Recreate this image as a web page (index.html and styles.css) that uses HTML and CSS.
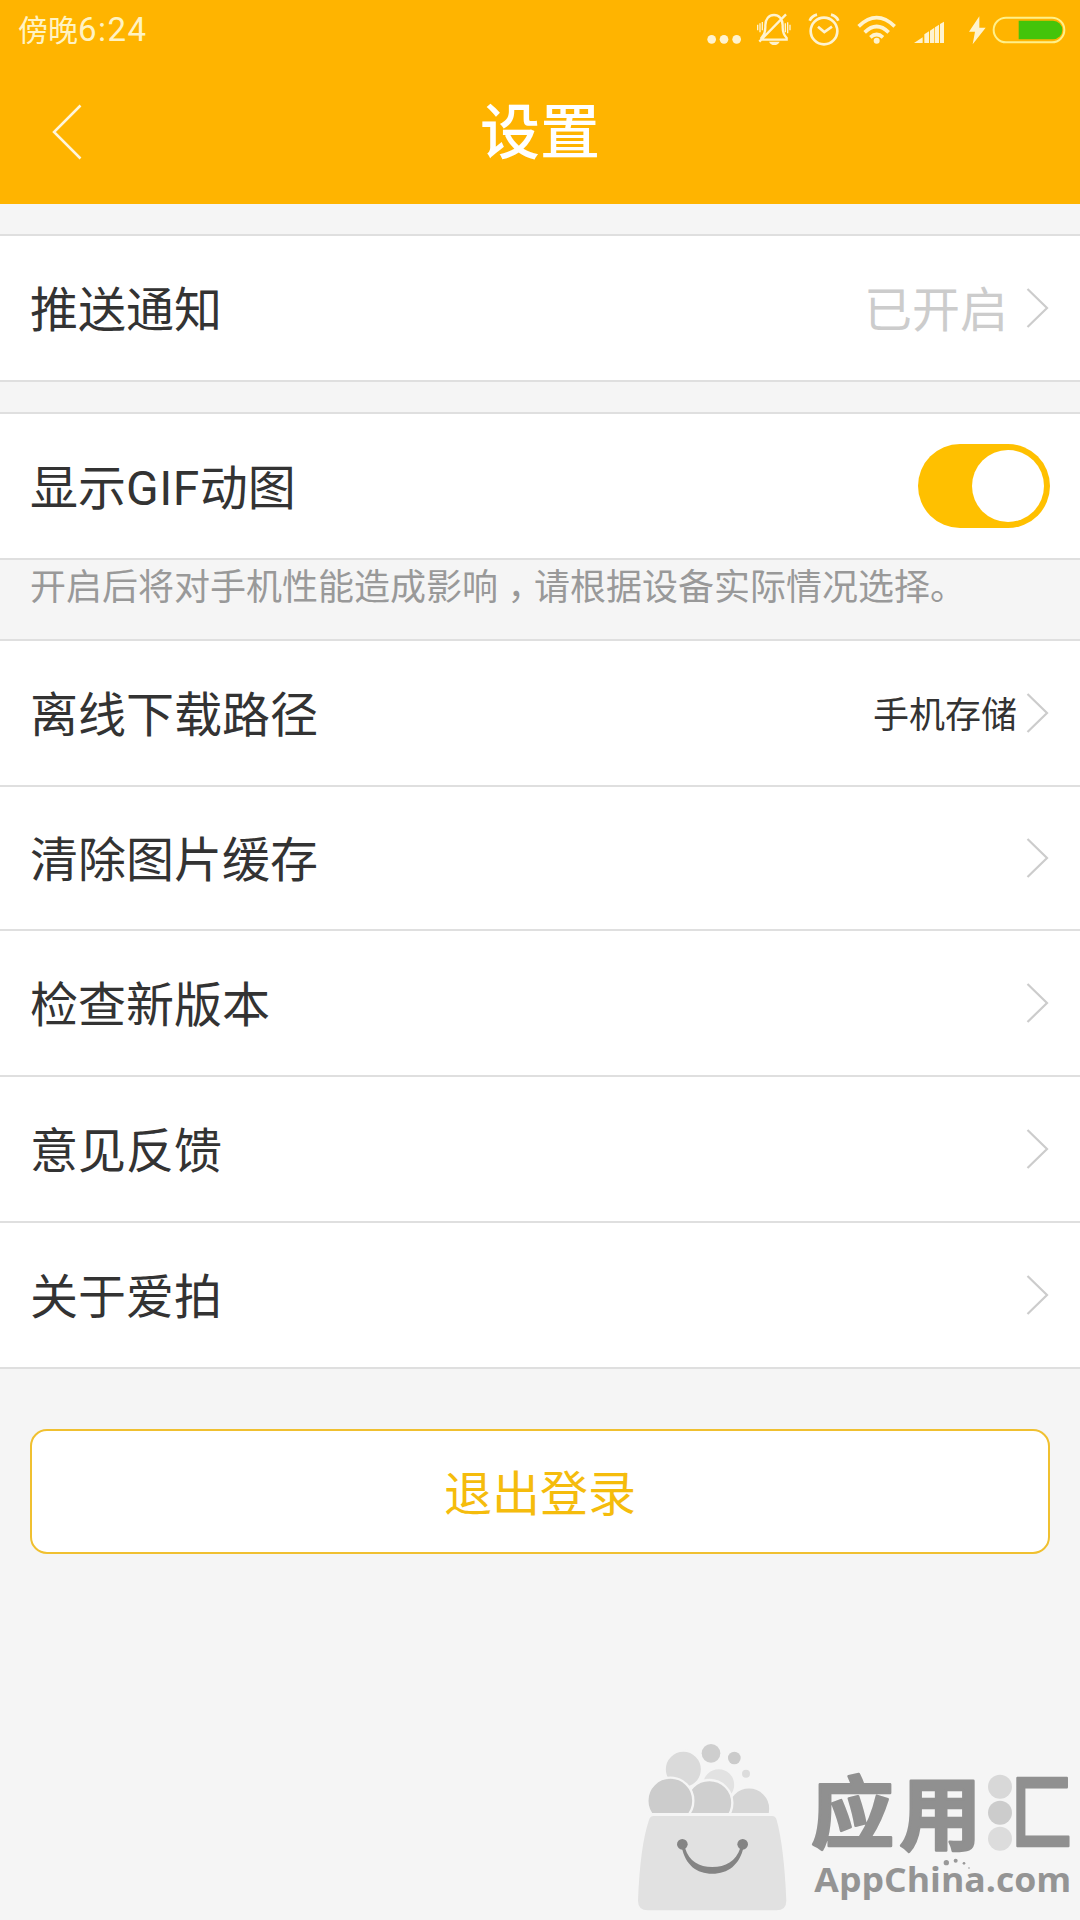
FILE: index.html
```html
<!DOCTYPE html>
<html lang="zh-CN">
<head>
<meta charset="utf-8">
<title>设置</title>
<link rel="stylesheet" href="styles.css">
</head>
<body>
<header class="header">
  <div class="status">
    <div class="time">傍晚<span class="digits">6:24</span></div>
    <svg class="status-icons" viewBox="0 0 1170 180" fill="none" stroke="#fff3cf" stroke-width="8">
      <g fill="#fff3cf" stroke="none"><circle cx="65" cy="118" r="13"/><circle cx="102" cy="118" r="13"/><circle cx="140" cy="118" r="13"/></g>
      <path stroke-width="7" d="M214 119h76v-5c-9-9-12-19-12-32V76c0-19-11-31-26-31s-26 12-26 31v6c0 13-3 23-12 32zM208 125L288 43"/>
      <path stroke-width="4" d="M203 74v17M210 70v27M217 66v25M286 70v27M293 67v33M300 74v17"/>
      <path fill="#fff3cf" stroke="none" d="M237 125h32q-5 10-16 10t-16-10z"/>
      <circle cx="402" cy="93" r="40"/><path d="M384 80l19 16 23-16M359 62q6-14 22-18M445 62q-6-14-22-18"/>
      <path stroke-width="11" d="M506 79q54-52 108 0M524 97q36-35 72 0M541 112q19-17 38 0"/><circle cx="560" cy="122" r="9" fill="#fff3cf" stroke="none"/>
      <path fill="#fff3cf" stroke="none" d="M672 129l26-17v17zM703 103l14-9v35h-14zM720 92l13-9v46h-13zM735 82l12-8v55h-12zM750 72l12-7v64h-12z"/>
      <path fill="#fff3cf" stroke="none" d="M868 49l-31 46h18l-7 38 39-50h-19z"/>
      <rect x="911" y="53" width="212" height="74" rx="37" stroke="#fff08a" stroke-width="6"/>
      <path fill="#44c40a" stroke="none" d="M986 62h103a28 28 0 0 1 0 56H986z"/>
    </svg>
  </div>
  <div class="titlebar">
    <svg class="back" viewBox="0 0 30 56"><path d="M28.500 1.500L2 28l26.500 26.500"/></svg>
    <h1 class="title">设置</h1>
  </div>
</header>
<main class="settings">
  <section class="group">
    <div class="row"><span class="label">推送通知</span><span class="value muted">已开启</span><svg class="chevron" viewBox="0 0 23 40"><path d="M1.500 1L21 20 1.500 39"/></svg></div>
  </section>
  <section class="group gif">
    <div class="row"><span class="label">显示<span class="latin">GIF</span>动图</span><span class="switch"><span class="knob"></span></span></div>
  </section>
  <p class="hint">开启后将对手机性能造成影响<span class="comma" lang="zh-TW">，</span>请根据设备实际情况选择。</p>
  <section class="group list">
    <div class="row"><span class="label">离线下载路径</span><span class="value small">手机存储</span><svg class="chevron" viewBox="0 0 23 40"><path d="M1.500 1L21 20 1.500 39"/></svg></div>
    <div class="row short"><span class="label">清除图片缓存</span><svg class="chevron" viewBox="0 0 23 40"><path d="M1.500 1L21 20 1.500 39"/></svg></div>
    <div class="row"><span class="label">检查新版本</span><svg class="chevron" viewBox="0 0 23 40"><path d="M1.500 1L21 20 1.500 39"/></svg></div>
    <div class="row"><span class="label">意见反馈</span><svg class="chevron" viewBox="0 0 23 40"><path d="M1.500 1L21 20 1.500 39"/></svg></div>
    <div class="row"><span class="label">关于爱拍</span><svg class="chevron" viewBox="0 0 23 40"><path d="M1.500 1L21 20 1.500 39"/></svg></div>
  </section>
  <button class="logout">退出登录</button>
</main>
<footer class="brand">
  <svg class="brand-logo" viewBox="0 0 1380 570">
    <g stroke="#f5f5f5" stroke-width="7">
      <circle cx="190" cy="118" r="56" fill="#dadada"/>
      <circle cx="296" cy="164" r="50" fill="#e2e2e2"/>
      <circle cx="387" cy="236" r="64" fill="#d6d6d6"/>
      <circle cx="268" cy="219" r="69" fill="#cfcfcf"/>
      <circle cx="151" cy="212" r="69" fill="#cccccc"/>
    </g>
    <path fill="#f5f5f5" d="M60 249h430v70H60z"/>
    <circle cx="273" cy="70" r="28" fill="#cecece"/><circle cx="343" cy="84" r="19" fill="#cbcbcb"/><circle cx="378" cy="131" r="12" fill="#dcdcdc"/>
    <path fill="#e1e1e1" d="M101 258H456Q467 258 470 270Q492 350 499 512Q499 541 469 541H84Q54 541 54 512Q60 350 87 270Q90 258 101 258z"/>
    <g fill="#848484"><circle cx="187" cy="343" r="16"/><circle cx="368" cy="343" r="16"/><path d="M185 350C196 405 230 431 277 431S359 405 371 350L361 354C347 395 317 411 277 411S208 395 195 354z"/></g>
    <g class="brand-cn">
      <text transform="translate(573 335) scale(1.020 .96)" x="0" y="0">应</text>
      <text transform="translate(838 338) scale(1.010 .98)" x="0" y="0">用</text>
      <text transform="translate(1173 338) scale(.765 1.010)" x="0" y="0">匚</text>
    </g>
    <circle cx="1140" cy="170" r="36" fill="#d8d8d8"/><circle cx="1140" cy="248" r="36" fill="#cccccc"/><circle cx="1140" cy="326" r="36" fill="#dcdcdc"/>
    <text class="brand-en" x="583" y="485" textLength="771" lengthAdjust="spacingAndGlyphs">AppChina.com</text>
    <g fill="#999"><circle cx="979" cy="398" r="8"/><circle cx="1007" cy="392" r="6"/><circle cx="1032" cy="400" r="4"/><circle cx="1047" cy="414" r="2.500"/></g>
  </svg>
</footer>
</body>
</html>
```
FILE: styles.css
```css
* { box-sizing: border-box; }
body {
  margin: 0;
  width: 1080px;
  height: 1920px;
  overflow: hidden;
  display: flex;
  flex-direction: column;
  background: #f5f5f5;
  color: #333;
  font-family: Roboto, "Noto Sans CJK SC", sans-serif;
}
.header { height: 204px; background: #ffb400; }
.status { height: 60px; display: flex; justify-content: space-between; }
.time {
  padding: 1px 0 0 18px;
  font-size: 30px;
  line-height: 58px;
  color: #fff3c4;
}
.digits { font-size: 33px; letter-spacing: 1.5px; }
.status-icons { width: 390px; height: 60px; }
.titlebar {
  height: 144px;
  display: grid;
  grid-template-columns: 132px 1fr 132px;
  align-items: center;
}
.back { width: 30px; height: 56px; margin-left: 52px; fill: none; stroke: #fff6dc; stroke-width: 2.5; }
.title { margin: 0; padding-top: 4px; font-size: 60px; line-height: 140px; font-weight: 500; color: #fff; text-align: center; }
.settings { display: flex; flex-direction: column; }
.group { margin-top: 30px; background: #fff; border-top: 2px solid #dfdfdf; }
.row {
  height: 146px;
  padding: 0 30px;
  display: flex;
  align-items: center;
  border-bottom: 2px solid #dfdfdf;
  font-size: 48px;
  line-height: 72px;
}
.row.short { height: 144px; }
.label { flex: 1; padding-top: 5px; }
.latin { letter-spacing: .5px; }
.value { padding-top: 5px; }
.muted { color: #ccc; margin-right: 18px; }
.small { font-size: 36px; margin-right: 9px; }
.chevron { width: 23px; height: 40px; margin-right: 1px; fill: none; stroke: #ccc; stroke-width: 2.2; }
.switch {
  width: 132px;
  height: 84px;
  padding: 6px;
  display: flex;
  justify-content: flex-end;
  border-radius: 42px;
  background: #ffc000;
}
.knob { width: 72px; height: 72px; border-radius: 50%; background: #fff; }
.hint { margin: 0; height: 79px; padding: 4px 30px 0; font-size: 36px; line-height: 49px; color: #999; }
.comma { font-family: "Noto Sans CJK TC", sans-serif; line-height: 1; position: relative; top: 10px; }
.list { margin-top: 0; }
.logout {
  height: 125px;
  margin: 60px 30px 0;
  padding: 0 0 4px;
  border: 2px solid #f0c030;
  border-radius: 17px;
  background: #fff;
  color: #f5bc0c;
  font-family: inherit;
  font-size: 48px;
}
.brand { margin-top: auto; display: flex; justify-content: flex-end; }
.brand-logo { width: 460px; height: 190px; display: block; }
.brand-cn {
  font-family: "Noto Sans CJK SC", sans-serif;
  font-weight: 700;
  font-size: 244px;
  fill: #909090;
  stroke: #909090;
  stroke-width: 8;
  stroke-linejoin: round;
}
.brand-en { font-family: "Open Sans", sans-serif; font-weight: 700; font-size: 100px; fill: #949494; }
```
